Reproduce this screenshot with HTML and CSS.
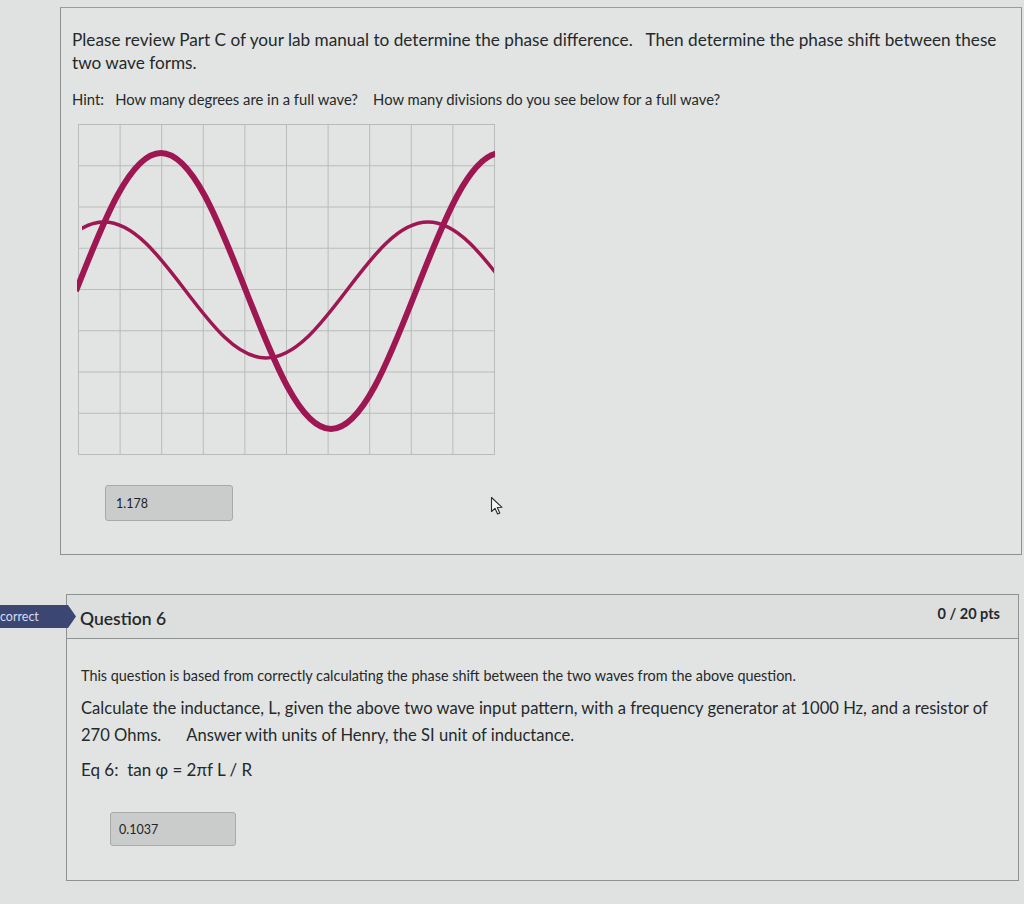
FILE: index.html
```html
<!DOCTYPE html>
<html>
<head>
<meta charset="utf-8">
<link rel="stylesheet" href="styles.css">
</head>
<body>
<div class="page">
  <section class="card card-top">
    <p class="lead">Please review Part C of your lab manual to determine the phase difference.&nbsp;&nbsp; Then determine the phase shift between these two wave forms.</p>
    <p class="hint">Hint:&nbsp;&nbsp; How many degrees are in a full wave?&nbsp;&nbsp;&nbsp; How many divisions do you see below for a full wave?</p>
    <svg class="graph" width="418" height="332" viewBox="76 124 418 332" xmlns="http://www.w3.org/2000/svg">
      <defs>
        <clipPath id="clipThick"><rect x="76" y="120" width="418" height="340"/></clipPath>
        <clipPath id="clipThin"><rect x="81" y="120" width="412" height="340"/></clipPath>
      </defs>
      <g stroke="#b9bcbb" stroke-width="1" fill="none">
        <rect x="77.5" y="125.5" width="416" height="330"/>
        <line x1="119.1" y1="125" x2="119.1" y2="456"/>
        <line x1="160.7" y1="125" x2="160.7" y2="456"/>
        <line x1="202.3" y1="125" x2="202.3" y2="456"/>
        <line x1="243.9" y1="125" x2="243.9" y2="456"/>
        <line x1="285.5" y1="125" x2="285.5" y2="456"/>
        <line x1="327.1" y1="125" x2="327.1" y2="456"/>
        <line x1="368.7" y1="125" x2="368.7" y2="456"/>
        <line x1="410.3" y1="125" x2="410.3" y2="456"/>
        <line x1="451.9" y1="125" x2="451.9" y2="456"/>
        <line x1="77" y1="166.75" x2="494" y2="166.75"/>
        <line x1="77" y1="208" x2="494" y2="208"/>
        <line x1="77" y1="249.25" x2="494" y2="249.25"/>
        <line x1="77" y1="290.5" x2="494" y2="290.5"/>
        <line x1="77" y1="331.75" x2="494" y2="331.75"/>
        <line x1="77" y1="373" x2="494" y2="373"/>
        <line x1="77" y1="414.25" x2="494" y2="414.25"/>
      </g>
      <path clip-path="url(#clipThin)" fill="none" stroke="#9e1753" stroke-width="3.5" d="M22 291 C48.4 256.2 73.7 223 103 223 C132.3 223 157.6 256.2 184 291 C210.4 325.8 235.7 359 265 359 C294.3 359 319.6 325.8 346 291 C372.4 256.2 397.7 223 427 223 C456.3 223 481.6 256.2 508 291"/>
      <path clip-path="url(#clipThick)" fill="none" stroke="#9e1753" stroke-width="6" d="M75 292 C102.7 221.3 129.2 154 160 154 C190.8 154 217.3 221.3 245 292 C272.7 362.7 299.2 430 330 430 C360.8 430 387.3 362.7 415 292 C442.7 221.3 469.2 154 500 154"/>
    </svg>
    <div class="answer-row">
      <div class="answer answer-1">1.178</div>
      <svg class="cursor" width="14" height="20" viewBox="0 0 14 20" xmlns="http://www.w3.org/2000/svg">
        <path d="M1.5 1.5 L1.5 15.5 L5 12.3 L7.6 18 L9.8 17 L7.3 11.5 L12 11.3 Z" fill="#f4f5f4" stroke="#2a2e30" stroke-width="1.1" stroke-linejoin="round"/>
      </svg>
    </div>
  </section>

  <section class="question">
    <div class="badge">correct</div>
    <div class="card card-q">
      <header class="q-head">
        <h2 class="q-title">Question 6</h2>
        <span class="q-pts">0 / 20 pts</span>
      </header>
      <div class="q-body">
        <p class="q-small">This question is based from correctly calculating the phase shift between the two waves from the above question.</p>
        <p class="q-main">Calculate the inductance, L, given the above two wave input pattern, with a frequency generator at 1000 Hz, and a resistor of 270 Ohms.&nbsp;&nbsp;&nbsp;&nbsp;&nbsp; Answer with units of Henry, the SI unit of inductance.</p>
        <p class="q-eq">Eq 6:&nbsp; tan φ = 2πf L / R</p>
        <div class="answer answer-2">0.1037</div>
      </div>
    </div>
  </section>
</div>
</body>
</html>
```

FILE: styles.css
```css
* { box-sizing: border-box; }

html, body {
  margin: 0;
  padding: 0;
  background: #dfe2e0;
  color: #25292b;
  font-family: Lato, "Open Sans", "Liberation Sans", sans-serif;
}

.page {
  width: 1024px;
  height: 904px;
  overflow: hidden;
  padding-top: 7px;
}

.card {
  border: 1px solid #8e9290;
  background: #e1e4e2;
}

.card-top {
  margin-left: 60px;
  width: 962px;
  height: 548px;
  padding: 20px 0 0 11px;
  border-top-color: #9a9d9b;
}

.lead {
  margin: 0;
  font-size: 17.2px;
  line-height: 23px;
  width: 940px;
}

.hint {
  margin: 16px 0 0;
  font-size: 14.8px;
  line-height: 18px;
}

.graph {
  display: block;
  margin: 15px 0 0 5px;
}

.answer-row {
  display: flex;
  align-items: center;
  margin-top: 30px;
  padding-left: 33px;
}

.answer {
  background: #c9cccb;
  border: 1px solid #a6aaa8;
  border-radius: 3px;
  font-size: 12.5px;
  display: flex;
  align-items: center;
  color: #1f2325;
}

.answer-1 {
  width: 128px;
  height: 36px;
  padding-left: 10px;
}

.cursor {
  margin-left: 257px;
  margin-top: 6px;
}

.question {
  position: relative;
  margin-top: 39px;
}

.badge {
  position: absolute;
  left: 0;
  top: 11px;
  width: 76px;
  height: 23px;
  background: #3c4673;
  color: #d8dcf2;
  font-size: 12.5px;
  line-height: 23px;
  clip-path: polygon(0 0, 68px 0, 76px 50%, 68px 100%, 0 100%);
}

.card-q {
  margin-left: 66px;
  width: 953px;
  height: 287px;
}

.q-head {
  display: flex;
  justify-content: space-between;
  align-items: flex-start;
  height: 44px;
  border-bottom: 1px solid #8e9290;
  background: #dcdfdd;
  padding: 0 18px 0 13px;
}

.q-title {
  margin: 14px 0 0;
  font-size: 17.5px;
  font-weight: 600;
  line-height: 20px;
}

.q-pts {
  margin-top: 10px;
  font-size: 14.5px;
  font-weight: 700;
  line-height: 18px;
}

.q-body {
  padding: 28px 0 0 14px;
}

.q-small {
  margin: 0;
  font-size: 14.4px;
  line-height: 18px;
}

.q-main {
  margin: 9.5px 0 0;
  font-size: 16.6px;
  line-height: 27px;
  width: 925px;
}

.q-eq {
  margin: 11.5px 0 0;
  font-size: 17px;
  line-height: 20px;
}

.answer-2 {
  margin: 32px 0 0 29px;
  width: 126px;
  height: 34px;
  padding-left: 8px;
}
```
